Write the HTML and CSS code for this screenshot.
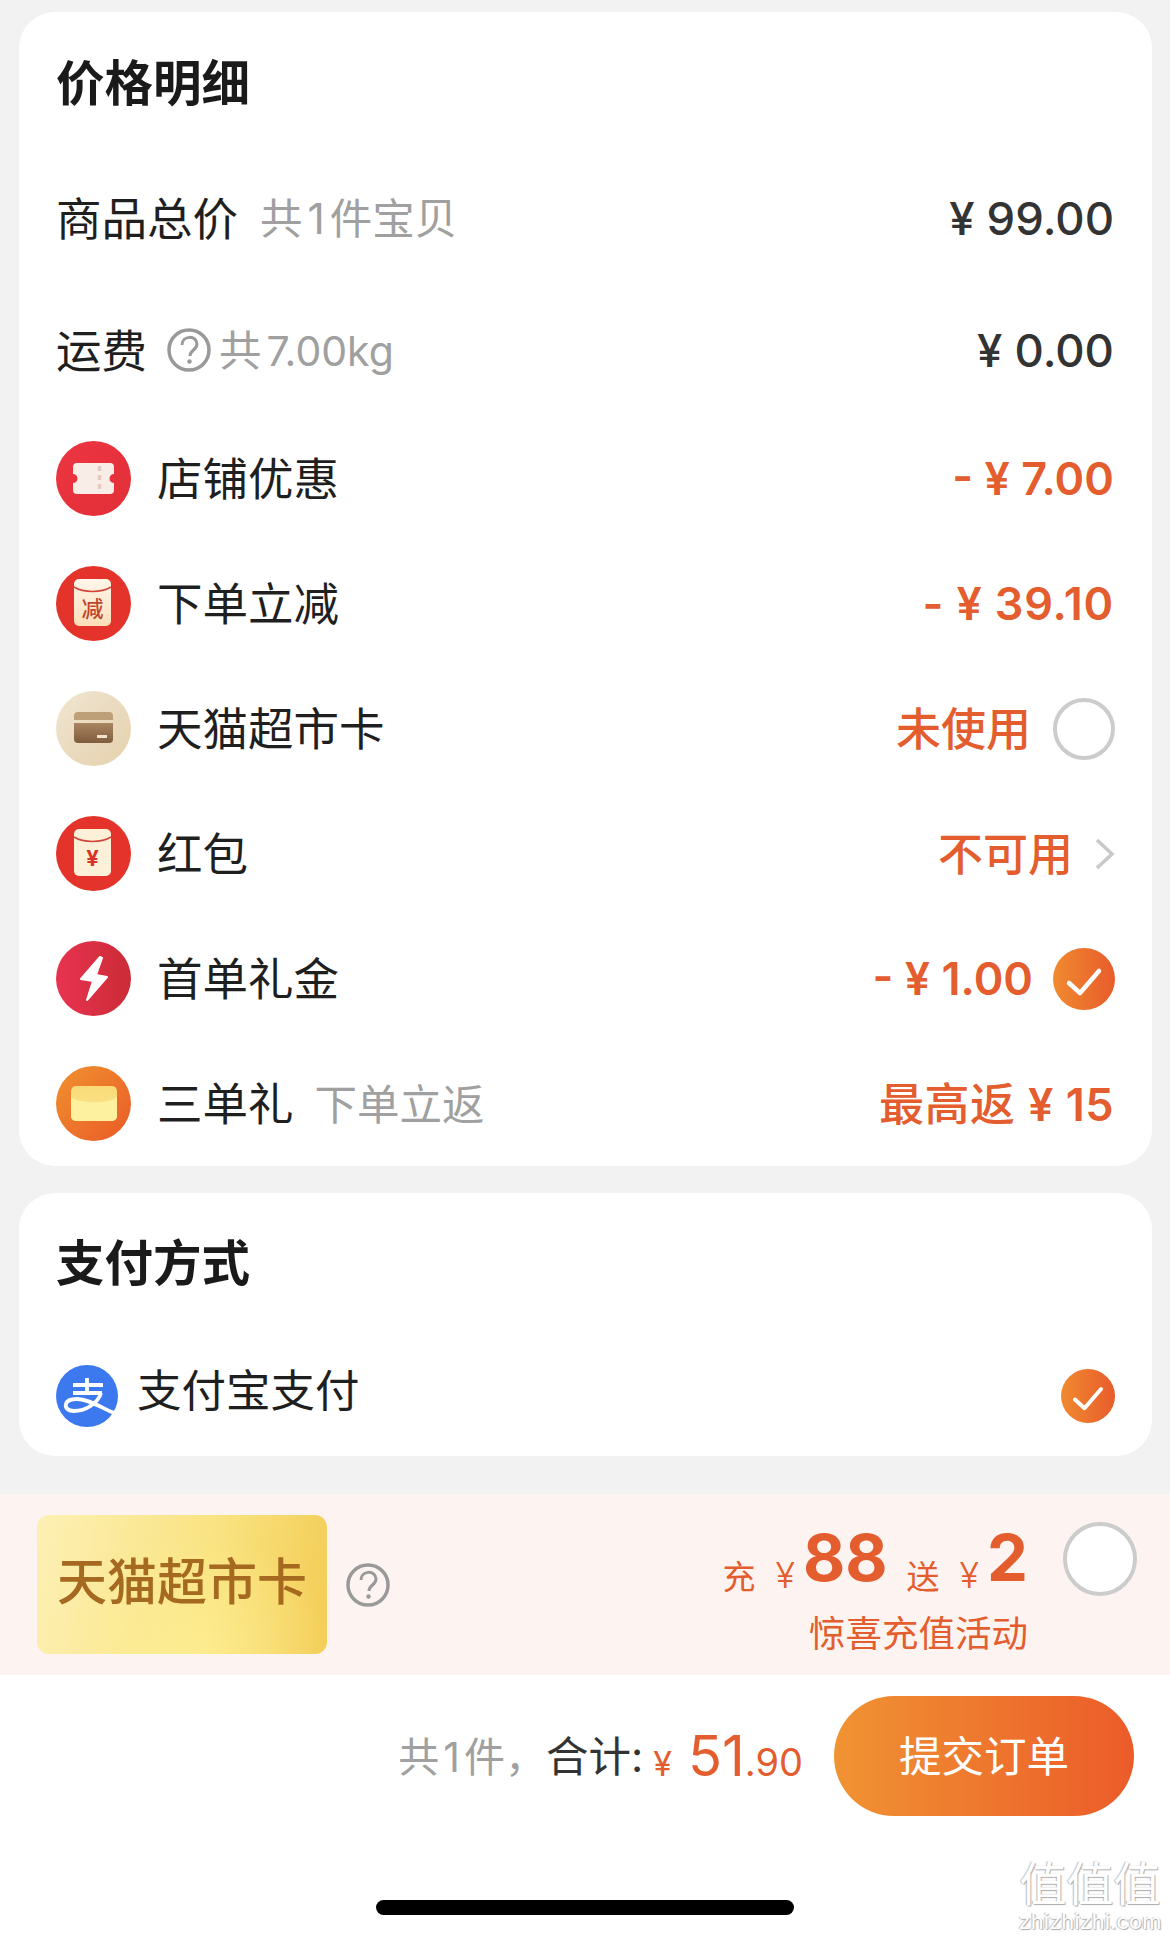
FILE: index.html
```html
<!DOCTYPE html>
<html>
<head>
  <meta charset="utf-8">
  <title>价格明细</title>
  <link rel="stylesheet" href="styles.css">
</head>
<body>
  <section class="card price-card">
    <h1 class="card-title">价格明细</h1>
    <div class="plain-row">
      <span class="label label-plain">商品总价</span>
      <span class="sub sub-count">共<i class="num-gap">1</i>件宝贝</span>
      <span class="total">¥ 99.00</span>
    </div>
    <div class="plain-row">
      <span class="label label-plain">运费</span>
      <svg class="help help-fee" viewBox="0 0 44 44"><circle cx="22" cy="22" r="20" fill="none" stroke="#999" stroke-width="3.500"/><path d="M15 17c0-10 15-10 15-1 0 6-7 6-7 12" fill="none" stroke="#999" stroke-width="3"/><circle cx="22.500" cy="33.500" r="2.200" fill="#999"/></svg>
      <span class="sub sub-weight">共<i class="num-gap">7.00kg</i></span>
      <span class="total">¥ 0.00</span>
    </div>

    <div class="icon-row">
      <svg class="row-icon" viewBox="0 0 75 75">
        <defs><linearGradient id="redA" x1="0" y1="0" x2="1" y2="1"><stop offset="0" stop-color="#ec3542"/><stop offset="1" stop-color="#e22f36"/></linearGradient></defs>
        <circle cx="37.5" cy="37.5" r="37.5" fill="url(#redA)"/>
        <path d="M21 22h33a4 4 0 0 1 4 4v7a4.500 4.500 0 0 0 0 9v7a4 4 0 0 1-4 4H21a4 4 0 0 1-4-4v-7a4.500 4.500 0 0 0 0-9v-7a4 4 0 0 1 4-4z" fill="#f8eee7"/>
        <path d="M43.500 25v25" stroke="#e3cbc3" stroke-width="3.500" stroke-dasharray="5 4"/>
      </svg>
      <span class="label">店铺优惠</span>
      <span class="amount">- ¥ 7.00</span>
    </div>
    <div class="icon-row">
      <svg class="row-icon" viewBox="0 0 75 75">
        <defs><linearGradient id="paper" x1="0" y1="0" x2="0" y2="1"><stop offset="0" stop-color="#fff6ea"/><stop offset="1" stop-color="#fbdfb8"/></linearGradient></defs>
        <circle cx="37.5" cy="37.5" r="37.5" fill="#e3332a"/>
        <rect x="18" y="13" width="37" height="47" rx="5" fill="url(#paper)"/>
        <path d="M18 21c10 6 27 6 37 0" fill="none" stroke="#d2433a" stroke-width="1.500"/>
        <text class="envelope-word" x="36.500" y="51" text-anchor="middle">减</text>
      </svg>
      <span class="label">下单立减</span>
      <span class="amount amount-wide">- ¥ 39.10</span>
    </div>
    <div class="icon-row">
      <svg class="row-icon" viewBox="0 0 75 75">
        <defs>
          <linearGradient id="sand" x1="0" y1="0" x2="1" y2="1"><stop offset="0" stop-color="#f1e6d2"/><stop offset="1" stop-color="#e4d0ac"/></linearGradient>
          <linearGradient id="brown" x1="0" y1="0" x2="0" y2="1"><stop offset="0" stop-color="#a98560"/><stop offset="1" stop-color="#7f5c3d"/></linearGradient>
        </defs>
        <circle cx="37.5" cy="37.5" r="37.5" fill="url(#sand)"/>
        <path d="M18 29v-4a4 4 0 0 1 4-4h31a4 4 0 0 1 4 4v4z" fill="#bda078"/>
        <path d="M18 32h39v16a4 4 0 0 1-4 4H22a4 4 0 0 1-4-4z" fill="url(#brown)"/>
        <rect x="41" y="44" width="10" height="3" fill="#efe3d0"/>
      </svg>
      <span class="label">天猫超市卡</span>
      <span class="amount amount-word">未使用</span>
      <span class="radio"></span>
    </div>
    <div class="icon-row">
      <svg class="row-icon" viewBox="0 0 75 75">
        <circle cx="37.5" cy="37.5" r="37.5" fill="#e3332a"/>
        <rect x="18" y="13" width="37" height="47" rx="5" fill="#fdf0d8"/>
        <path d="M18 21c10 6 27 6 37 0" fill="none" stroke="#d2433a" stroke-width="1.500"/>
        <text class="envelope-yen" x="36.500" y="50" text-anchor="middle">¥</text>
      </svg>
      <span class="label">红包</span>
      <span class="amount amount-word">不可用</span>
      <svg class="chevron" viewBox="0 0 20 32"><path d="M2 2l15 14L2 30" fill="none" stroke="#c8c8c8" stroke-width="3.500"/></svg>
    </div>
    <div class="icon-row">
      <svg class="row-icon" viewBox="0 0 75 75">
        <defs><linearGradient id="redB" x1="0" y1="0" x2="1" y2="0"><stop offset="0" stop-color="#e83350"/><stop offset="1" stop-color="#cb2b36"/></linearGradient></defs>
        <circle cx="37.5" cy="37.5" r="37.5" fill="url(#redB)"/>
        <path d="M44 16L25 38l12 2-6 19 20-23-11-2 6-17z" fill="#fff" stroke="#fff" stroke-width="2" stroke-linejoin="round"/>
      </svg>
      <span class="label">首单礼金</span>
      <span class="amount">- ¥ 1.00</span>
      <svg class="check" viewBox="0 0 62 62">
        <defs><linearGradient id="orangeA" x1="0" y1="0" x2="1" y2="0"><stop offset="0" stop-color="#f08a30"/><stop offset="1" stop-color="#e85c2b"/></linearGradient></defs>
        <circle cx="31" cy="31" r="31" fill="url(#orangeA)"/>
        <path d="M16 35l11 10 19-22" fill="none" stroke="#fff" stroke-width="4.500" stroke-linecap="round" stroke-linejoin="round"/>
      </svg>
    </div>
    <div class="icon-row">
      <svg class="row-icon" viewBox="0 0 75 75">
        <defs>
          <linearGradient id="orangeB" x1="0" y1="0" x2="1" y2="1"><stop offset="0" stop-color="#f0922f"/><stop offset="1" stop-color="#ea5a27"/></linearGradient>
          <linearGradient id="mail" x1="0" y1="0" x2="0" y2="1"><stop offset="0" stop-color="#f9d978"/><stop offset="1" stop-color="#fbe98f"/></linearGradient>
        </defs>
        <circle cx="37.5" cy="37.5" r="37.5" fill="url(#orangeB)"/>
        <rect x="15" y="20" width="46" height="35" rx="5" fill="url(#mail)"/>
        <path d="M15 31c8 7 38 7 46 0v19a5 5 0 0 1-5 5H20a5 5 0 0 1-5-5z" fill="#fdf09f"/>
      </svg>
      <span class="label">三单礼</span>
      <span class="sub sub-return">下单立返</span>
      <span class="amount amount-mixed">最高返 <i class="amount-num">¥ 15</i></span>
    </div>
  </section>

  <section class="card pay-card">
    <h1 class="card-title pay-title">支付方式</h1>
    <div class="pay-row">
      <svg class="ali-icon" viewBox="0 0 62 62">
        <circle cx="31" cy="31" r="31" fill="#3c79ee"/>
        <path d="M17 20h30M31 13v15M17 28h29M45 28c-3 10-15 18-27 18-7 0-9-4-8-7 1-4 6-5 11-5 11 0 23 8 37 14" fill="none" stroke="#fff" stroke-width="3.800"/>
      </svg>
      <span class="label">支付宝支付</span>
      <svg class="check check-small" viewBox="0 0 62 62">
        <circle cx="31" cy="31" r="31" fill="url(#orangeA)"/>
        <path d="M16 35l11 10 19-22" fill="none" stroke="#fff" stroke-width="4.500" stroke-linecap="round" stroke-linejoin="round"/>
      </svg>
    </div>
  </section>

  <section class="promo">
    <div class="gold-card">天猫超市卡</div>
    <svg class="help help-promo" viewBox="0 0 44 44"><circle cx="22" cy="22" r="20" fill="none" stroke="#999" stroke-width="3.500"/><path d="M15 17c0-10 15-10 15-1 0 6-7 6-7 12" fill="none" stroke="#999" stroke-width="3"/><circle cx="22.500" cy="33.500" r="2.200" fill="#999"/></svg>
    <div class="promo-text">
      <div class="promo-line">
        <span class="promo-small">充</span>
        <span class="promo-yen">¥</span>
        <span class="promo-big">88</span>
        <span class="promo-small promo-give">送</span>
        <span class="promo-yen">¥</span>
        <span class="promo-big">2</span>
      </div>
      <div class="promo-note">惊喜充值活动</div>
    </div>
    <span class="radio radio-big"></span>
  </section>

  <footer class="bottom">
    <div class="submit-row">
      <div class="sum">
        <span class="sum-count">共<i class="sum-one">1</i>件，</span>
        <span class="sum-label">合计:</span>
        <span class="sum-yen">¥</span>
        <span class="sum-int">51</span><span class="sum-dec">.90</span>
      </div>
      <div class="submit">提交订单</div>
    </div>
    <div class="home-bar"></div>
    <div class="watermark">
      <div class="mark-word">值值值</div>
      <div class="mark-site">zhizhizhi.com</div>
    </div>
  </footer>
</body>
</html>
```

FILE: styles.css
```css
body {
  margin: 0;
  padding-top: 12px;
  height: 1927px;
  overflow: hidden;
  position: relative;
  background: #f2f2f2;
  color: #1f1f1f;
  font-family: Inter, "Noto Sans CJK SC", sans-serif;
}

i {
  font-style: normal;
}

.card {
  margin: 0 18px 0 19px;
  padding: 0 38px;
  background: #fff;
  border-radius: 36px;
}

.price-card {
  height: 1154px;
}

.pay-card {
  height: 263px;
  margin-top: 27px;
}

.card-title {
  display: flex;
  align-items: center;
  box-sizing: border-box;
  height: 140px;
  margin: 0 0 0 -1px;
  padding-bottom: 5px;
  font-size: 48.5px;
  font-weight: 700;
  color: #1a1a1a;
}

.pay-title {
  height: 142px;
  padding-bottom: 8px;
}

.plain-row {
  display: flex;
  align-items: center;
  height: 132px;
}

.icon-row {
  display: flex;
  align-items: center;
  height: 125px;
}

.pay-row {
  display: flex;
  align-items: center;
  height: 121px;
}

.label {
  padding-bottom: 5px;
  font-size: 45.5px;
}

.label-plain {
  margin-left: -1px;
}

.pay-row .label {
  padding-bottom: 16px;
  font-size: 44.5px;
}

.sub {
  margin-left: 22px;
  padding-bottom: 5px;
  font-size: 42.5px;
  color: #a0a0a0;
}

.sub-count .num-gap {
  margin: 0 5px;
}

.sub-weight {
  margin-left: 20px;
}

.sub-weight .num-gap {
  margin-left: 5px;
  font-size: 41px;
}

.sub-return {
  margin-left: 21px;
}

.total {
  margin-left: auto;
  font-size: 45.5px;
  font-weight: 500;
  color: #333;
}

.amount {
  margin-left: auto;
  font-size: 45px;
  font-weight: 600;
  color: #e35d2e;
}

.amount-wide {
  letter-spacing: .8px;
}

.amount-word {
  padding-bottom: 5px;
  font-weight: 500;
}

.amount-mixed {
  padding-bottom: 5px;
  font-weight: 500;
  letter-spacing: .5px;
}

.amount-num {
  font-weight: 600;
}

.row-icon {
  flex: none;
  width: 75px;
  height: 75px;
  margin-left: -1px;
  margin-right: 26px;
}

.envelope-word {
  font-size: 22px;
  font-weight: 500;
  fill: #c0452f;
}

.envelope-yen {
  font-size: 22px;
  font-weight: 700;
  fill: #d8352a;
}

.help {
  flex: none;
  width: 44px;
  height: 44px;
}

.help-fee {
  margin-left: 20px;
  margin-right: -12px;
}

.radio {
  flex: none;
  box-sizing: border-box;
  width: 62px;
  height: 62px;
  margin-left: 22px;
  margin-right: -1px;
  background: #fff;
  border: 4px solid #ccc;
  border-radius: 50%;
}

.check {
  flex: none;
  width: 62px;
  height: 62px;
  margin-left: 20px;
  margin-right: -1px;
}

.check-small {
  width: 54px;
  height: 54px;
  margin-left: auto;
}

.chevron {
  flex: none;
  width: 20px;
  height: 32px;
  margin-left: 22px;
  margin-right: -1px;
}

.ali-icon {
  flex: none;
  width: 62px;
  height: 62px;
  margin-left: -1px;
  margin-right: 19px;
}

.promo {
  display: flex;
  align-items: center;
  height: 181px;
  margin-top: 38px;
  padding: 0 33px 0 37px;
  background: #fdf3f0;
}

.gold-card {
  box-sizing: border-box;
  width: 290px;
  height: 139px;
  padding-left: 20px;
  line-height: 134px;
  font-size: 50px;
  font-weight: 500;
  color: #a5691f;
  white-space: nowrap;
  background: radial-gradient(ellipse at 55% 95%, rgba(255, 240, 150, .7), transparent 60%), linear-gradient(100deg, #fdf0b4, #f9e27f 60%, #f3cc55);
  border-radius: 12px;
}

.help-promo {
  margin-left: 19px;
}

.promo-text {
  margin-top: 7px;
  margin-left: auto;
  text-align: right;
  color: #e35d2e;
}

.promo-line {
  display: flex;
  align-items: flex-end;
  justify-content: flex-end;
  height: 76px;
  line-height: 76px;
}

.promo-small {
  font-size: 33px;
  line-height: 38px;
}

.promo-yen {
  margin-left: 20px;
  margin-right: 8px;
  font-size: 36px;
  font-weight: 300;
  line-height: 42px;
}

.promo-give {
  margin-left: 19px;
}

.promo-big {
  font-size: 65px;
  font-weight: 700;
}

.promo-note {
  margin-top: 16px;
  font-size: 36.5px;
  line-height: 44px;
}

.radio-big {
  align-self: flex-start;
  width: 74px;
  height: 74px;
  margin-top: 28px;
  margin-left: 35px;
  margin-right: 0;
}

.bottom {
  height: 264px;
  background: #fff;
}

.submit-row {
  display: flex;
  align-items: center;
  justify-content: flex-end;
  padding: 21px 36px 0 0;
}

.sum {
  display: flex;
  align-items: baseline;
  margin-right: 31px;
}

.sum-count {
  font-size: 41px;
  color: #a0a0a0;
  transform: translateY(-4px);
}

.sum-one {
  margin: 0 4px;
}

.sum-label {
  font-size: 42.5px;
  color: #333;
  transform: translateY(-4px);
}

.sum-yen {
  margin-left: 10px;
  margin-right: 16px;
  font-size: 34px;
  color: #e35d2e;
}

.sum-int {
  font-size: 56px;
  color: #e35d2e;
}

.sum-dec {
  font-size: 38px;
  color: #e35d2e;
}

.submit {
  width: 300px;
  height: 120px;
  line-height: 122px;
  text-align: center;
  font-size: 42.5px;
  color: #fff;
  background: linear-gradient(90deg, #f09333, #ec5b29);
  border-radius: 60px;
}

.home-bar {
  width: 418px;
  height: 15px;
  margin: 84px auto 0;
  background: #000;
  border-radius: 8px;
}

/* site watermark stamped over the corner of the capture */
.watermark {
  position: absolute;
  right: 8px;
  bottom: 7px;
  width: 144px;
  text-align: center;
  color: #fff;
  text-shadow: 1px 1px 1px #aaa, -1px 0 1px #bbb;
}

.mark-word {
  font-size: 47px;
  line-height: 52px;
}

.mark-site {
  font-size: 22px;
  line-height: 22px;
}
```
